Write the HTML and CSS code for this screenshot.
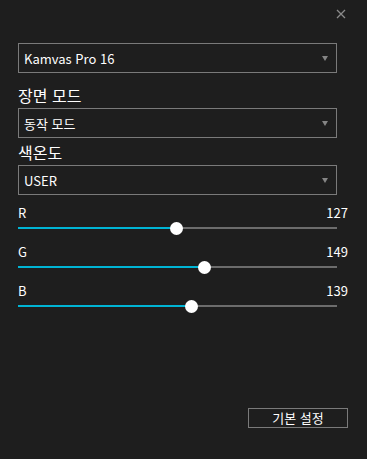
FILE: index.html
```html
<!DOCTYPE html>
<html lang="ko">
<head>
<meta charset="utf-8">
<link rel="stylesheet" href="styles.css">
</head>
<body>
<div class="window">
  <div class="titlebar">
    <svg class="close" width="10" height="10" viewBox="0 0 10 10"><path d="M1 1 L9 9 M9 1 L1 9" stroke="#8a8a8a" stroke-width="1.3" fill="none"/></svg>
  </div>
  <div class="panel">
    <div class="select first"><span>Kamvas Pro 16</span><i class="arrow"></i></div>
    <div class="label">장면 모드</div>
    <div class="select"><span>동작 모드</span><i class="arrow"></i></div>
    <div class="label second">색온도</div>
    <div class="select"><span>USER</span><i class="arrow"></i></div>

    <div class="slider top">
      <div class="head"><span>R</span><span>127</span></div>
      <div class="track"><div class="fill" style="width:49.8%"></div><div class="thumb" style="left:49.8%"></div></div>
    </div>
    <div class="slider">
      <div class="head"><span>G</span><span>149</span></div>
      <div class="track"><div class="fill" style="width:58.4%"></div><div class="thumb" style="left:58.4%"></div></div>
    </div>
    <div class="slider">
      <div class="head"><span>B</span><span>139</span></div>
      <div class="track"><div class="fill" style="width:54.5%"></div><div class="thumb" style="left:54.5%"></div></div>
    </div>

    <div class="footer"><button class="btn">기본 설정</button></div>
  </div>
</div>
</body>
</html>
```
FILE: styles.css
```css
html, body {
  margin: 0;
  padding: 0;
  background: #1e1e1e;
}
body {
  width: 367px;
  height: 459px;
  overflow: hidden;
  font-family: "Noto Sans CJK KR", "Noto Sans", sans-serif;
  color: #ffffff;
}
.window {
  height: 459px;
  display: flex;
  flex-direction: column;
}
.titlebar {
  height: 43px;
  display: flex;
  justify-content: flex-end;
  align-items: flex-start;
  padding: 9px 21px 0 0;
  box-sizing: border-box;
}
.close {
  display: block;
}
.panel {
  flex: 1;
  display: flex;
  flex-direction: column;
  padding: 0 19px 31px 18px;
}
.select {
  height: 30px;
  box-sizing: border-box;
  border: 1px solid #7a7a7a;
  margin-right: 11px;
  padding: 0 8px 0 5px;
  display: flex;
  align-items: center;
  justify-content: space-between;
  font-size: 13px;
  color: #ffffff;
}
.select.first {
  margin-bottom: 8px;
}
.arrow {
  width: 0;
  height: 0;
  border-left: 3.5px solid transparent;
  border-right: 3.5px solid transparent;
  border-top: 5px solid #858585;
}
.label {
  font-size: 16px;
  line-height: 20px;
  margin: 4px 0 3px;
  color: #ffffff;
}
.slider {
  margin-top: 15px;
}
.slider.top {
  margin-top: 10px;
}
.head {
  display: flex;
  justify-content: space-between;
  font-size: 13px;
  line-height: 16px;
}
.track {
  position: relative;
  height: 2px;
  margin-top: 6px;
  margin-right: 11px;
  background: #6c6c6c;
}
.fill {
  height: 100%;
  background: #00b4d4;
}
.thumb {
  position: absolute;
  top: 50%;
  width: 13px;
  height: 13px;
  margin: -6.5px 0 0 -6.5px;
  border-radius: 50%;
  background: #ffffff;
}
.footer {
  margin-top: auto;
  display: flex;
  justify-content: flex-end;
}
.btn {
  width: 100px;
  height: 20px;
  box-sizing: border-box;
  border: 1px solid #7a7a7a;
  background: transparent;
  color: #ffffff;
  font-family: "Noto Sans CJK KR", sans-serif;
  font-size: 13px;
  line-height: 16px;
  padding: 0;
}
```
